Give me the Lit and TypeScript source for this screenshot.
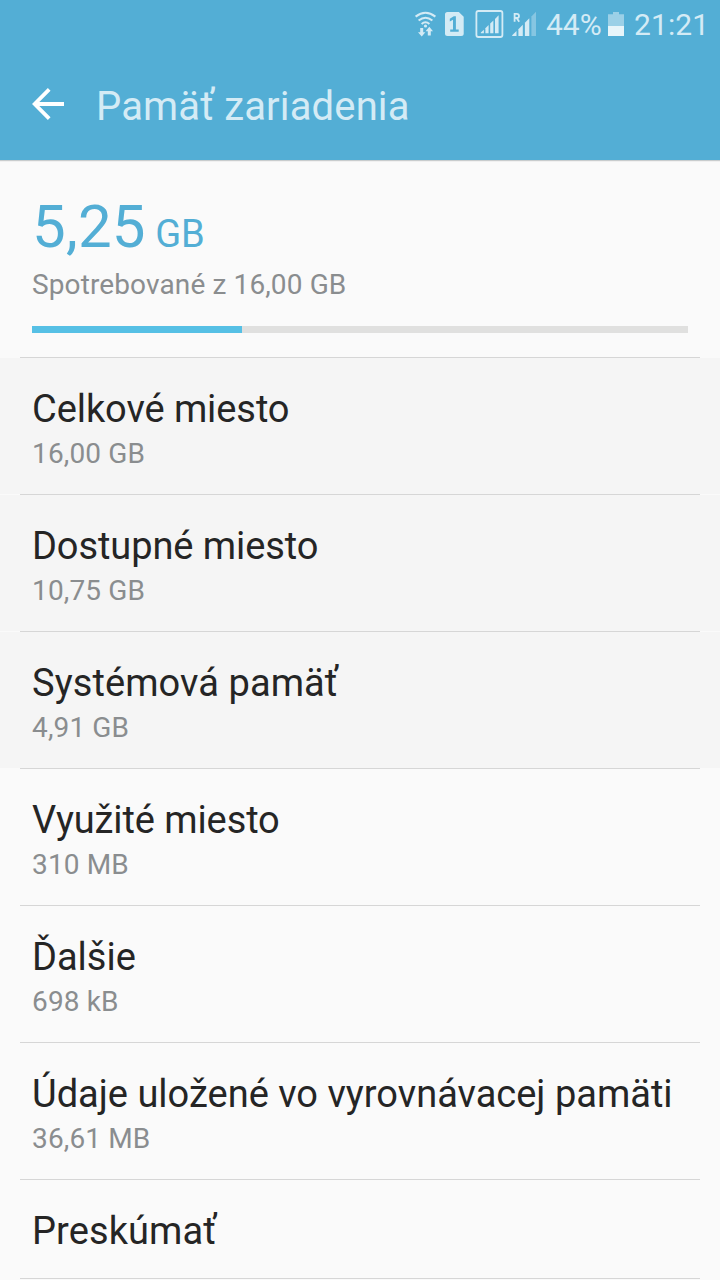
import { LitElement, html, css } from "lit";
import { customElement, property } from "lit/decorators.js";

@customElement("status-bar")
class StatusBar extends LitElement {
  static styles = css`
    :host { display: flex; height: 48px; color: #d4ebf5; }
    .icons { display: block; flex: none; margin-left: 410px; }
    .text { font-size: 30px; line-height: 50px; white-space: nowrap; }
    .percent { width: 61px; }
    .time { margin-left: 9px; letter-spacing: 0.1px; }
    .battery { display: block; flex: none; }
  `;
  render() {
    return html`
      <svg class="icons" width="136" height="48" viewBox="410 0 136 48" fill="none">
        <g stroke="#d4ebf5" stroke-width="2">
          <path d="M415.6 16.6Q425.5 9 435.4 16.6" />
          <path d="M418.6 20.5Q425.5 15 432.4 20.5" />
          <path d="M421.6 24Q425.5 20.6 429.4 24" />
        </g>
        <g fill="#d4ebf5">
          <circle cx="425.5" cy="26" r="1.6" />
          <path d="M420.2 28h3v4.3h2.2L421.7 36.6l-3.7-4.3h2.2z" />
          <path d="M427.8 35.5v-4.2h-2.2l3.7-4.5 3.7 4.5h-2.2v4.2z" />
          <path d="M447.5 12h11.3l4.9 4.8V33.5q0 2.5-2.5 2.5h-13.7q-2.5 0-2.5-2.5v-19q0-2.5 2.5-2.5z" />
        </g>
        <path d="M449.8 18.8l4-2.6h2.1v13.2h2.8v2.4h-8.5v-2.4h2.8v-9.6l-3.2 1.6z" fill="#53aed5" />
        <rect x="476.4" y="11" width="26" height="26" rx="2" stroke="#d4ebf5" stroke-width="1.8" />
        <g fill="#d4ebf5">
          <path d="M480.8 33.2v-.6l3.1-2.8v3.4z" />
          <path d="M485.4 33.2v-5l3.2-3.1v8.1z" />
          <path d="M490.2 33.2v-9.6l3.2-3.2v12.8z" />
          <path d="M495 33.2V18.9l3.6-3.7v18z" />
          <path d="M512.2 36v-.8l4.3-4.3V36z" />
          <path d="M518.4 36v-6.7l4.4-4.5V36z" />
          <path d="M524.9 36V22.7l4.4-4.5V36z" />
          <path d="M531.4 36V16.4l4.6-4.7V36z" opacity=".4" />
        </g>
        <path d="M514.6 21.8v-8h2.1q2.3 0 2.3 2.1t-2.3 2.1h-2.1m2 0l2.6 3.8" stroke="#d4ebf5" stroke-width="1.8" />
      </svg>
      <span class="text percent">44%</span>
      <svg class="battery" width="18" height="48" viewBox="607 0 18 48">
        <path d="M608 26V14.2h5V12h6v2.2h5V26z" fill="#9bd0e7" />
        <path d="M608 26h16v10h-16z" fill="#e8f5fa" />
      </svg>
      <span class="text time">21:21</span>
    `;
  }
}

@customElement("storage-row")
class StorageRow extends LitElement {
  @property() label = "";
  @property() value = "";
  @property({ type: Number }) tracking = 0;
  @property({ type: Boolean, reflect: true }) shaded = false;

  static styles = css`
    :host { display: block; }
    .body { padding: 28px 32px 24px; white-space: nowrap; }
    :host([shaded]) .body { background: #f5f5f5; }
    .label { font-size: 38px; line-height: 46px; color: #252525; }
    .value { padding-top: 5px; font-size: 28px; line-height: 34px; height: 33px; color: #8a8d8f; letter-spacing: 0.14px; }
    .divider { height: 1px; margin: 0 20px; background: #d6d6d6; }
  `;
  render() {
    return html`
      <div class="body">
        <div class="label" style="letter-spacing:${this.tracking}px">${this.label}</div>
        ${this.value ? html`<div class="value">${this.value}</div>` : ""}
      </div>
      <div class="divider"></div>
    `;
  }
}

const ROWS = [
  { label: "Celkové miesto", value: "16,00 GB", shaded: true, tracking: -0.08 },
  { label: "Dostupné miesto", value: "10,75 GB", shaded: true, tracking: -0.08 },
  { label: "Systémová pamäť", value: "4,91 GB", shaded: true, tracking: 0.08 },
  { label: "Využité miesto", value: "310 MB", shaded: false, tracking: -0.1 },
  { label: "Ďalšie", value: "698 kB", shaded: false, tracking: 0 },
  { label: "Údaje uložené vo vyrovnávacej pamäti", value: "36,61 MB", shaded: false, tracking: 0 },
  { label: "Preskúmať", value: "", shaded: false, tracking: 0.1 },
];

@customElement("app-root")
class AppRoot extends LitElement {
  static styles = css`
    :host {
      display: block;
      width: 720px;
      height: 1280px;
      overflow: hidden;
      background: #fafafa;
      font-family: Roboto, sans-serif;
    }
    .header { background: #53aed5; height: 160px; }
    .bar { display: flex; height: 112px; align-items: flex-start; }
    .back { display: block; flex: none; margin: 36px 28px 0 28px; }
    .title { font-size: 40px; line-height: 48px; padding-top: 35px; color: #d4ebf5; font-weight: 400; margin: 0; white-space: nowrap; letter-spacing: 0.14px; }
    .edge { height: 2px; background: linear-gradient(#c8cccd 50%, #f0f0f0 50%); }
    .summary { height: 195px; padding: 29px 32px 0; box-sizing: border-box; }
    .used { color: #53aed5; font-size: 60px; line-height: 72px; height: 77px; white-space: nowrap; letter-spacing: 0.2px; }
    .unit { font-size: 38px; letter-spacing: 0; }
    .total { color: #8a8d8f; font-size: 28px; line-height: 34px; letter-spacing: 0.12px; }
    .track { height: 7px; margin-top: 24px; background: #e0e0df; }
    .fill { height: 7px; background: #56c0e5; }
    .divider { height: 1px; margin: 0 20px; background: #d6d6d6; }
  `;
  render() {
    return html`
      <div class="header">
        <status-bar></status-bar>
        <div class="bar">
          <svg class="back" width="40" height="40" viewBox="28 84 40 40" fill="none" stroke="#fff" stroke-width="3.8">
            <path d="M64 104H35M49.2 89.3L34.7 104l14.5 14.7" />
          </svg>
          <h1 class="title">Pamäť zariadenia</h1>
        </div>
      </div>
      <div class="edge"></div>
      <div class="summary">
        <div class="used">5,25<span class="unit"> GB</span></div>
        <div class="total">Spotrebované z 16,00 GB</div>
        <div class="track"><div class="fill" style="width:${(210 / 656) * 100}%"></div></div>
      </div>
      <div class="divider"></div>
      ${ROWS.map(
        (r) => html`<storage-row .label=${r.label} .value=${r.value} .tracking=${r.tracking} ?shaded=${r.shaded}></storage-row>`
      )}
    `;
  }
}
